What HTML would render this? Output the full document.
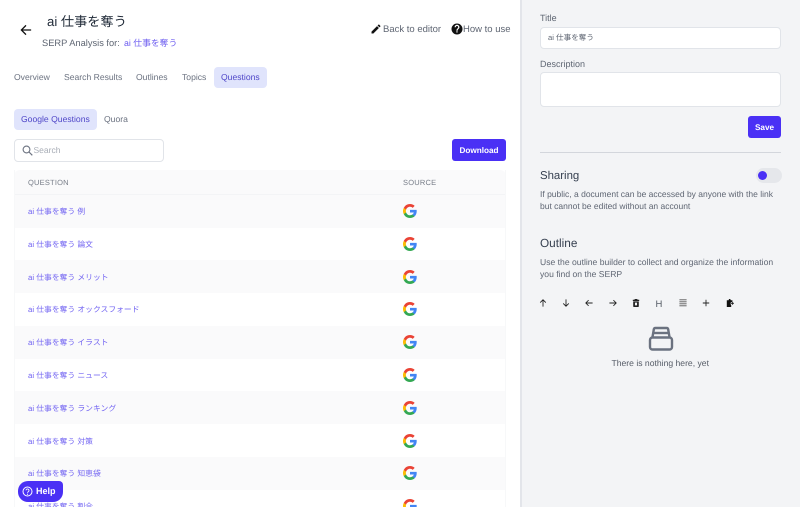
<!DOCTYPE html>
<html lang="ja"><head><meta charset="utf-8"><title>SERP Analysis</title>
<style>
*{box-sizing:border-box}
html,body{margin:0;padding:0;width:800px;height:507px;overflow:hidden;background:#fff}
body{position:relative;font-family:"Liberation Sans","Noto Sans CJK JP",sans-serif;color:#6b7280;text-rendering:geometricPrecision;filter:blur(.3px)}
.t{position:absolute;white-space:nowrap;line-height:1}
.a{position:absolute}
svg{position:absolute;display:block}
.tab{font-size:8.6px;color:#6b7280}
.act{position:absolute;background:#e0e4fc;border-radius:4px}
.link{color:#6c5cf0}
.row{position:absolute;left:14px;width:492px;height:33px}
.row.s{background:#fafafb}
.row span{position:absolute;left:14px;top:11.5px;font-size:7.8px;line-height:11px;color:#7264f2;white-space:nowrap}
.row svg{left:389px;top:9.5px}
.input{position:absolute;background:#fff;border:1px solid #e1e4e9;border-radius:4px}
.btn{position:absolute;background:#4a30f5;border-radius:3px;color:#fff;font-weight:bold;font-size:8.2px;text-align:center}
.ic{fill:none;stroke:#222;stroke-width:1.1}
</style></head><body>
<svg width="12" height="12" viewBox="0 0 14 14" style="left:20px;top:23.500px"><path d="M13 7H2M7 1.600L1.600 7 7 12.400" fill="none" stroke="#111" stroke-width="1.500"/></svg>
<div class="t" style="left:47px;top:15px;font-size:13.200px;color:#1f2937">ai 仕事を奪う</div>
<div class="t" style="left:42px;top:38.500px;font-size:9.300px;color:#5f6673">SERP Analysis for:</div>
<div class="t link" style="left:124px;top:38.500px;font-size:8.800px">ai 仕事を奪う</div>
<svg width="12" height="12" viewBox="0 0 24 24" style="left:370px;top:23px"><path d="M3 17.250V21h3.750L17.800 9.940l-3.750-3.750zM20.700 7.040a1 1 0 0 0 0-1.410l-2.340-2.340a1 1 0 0 0-1.410 0l-1.830 1.830 3.750 3.750z" fill="#111"/></svg>
<div class="t" style="left:383px;top:24.500px;font-size:9.500px;color:#5f6673">Back to editor</div>
<svg width="12" height="12" viewBox="0 0 24 24" style="left:450.500px;top:23px"><path d="M12 1a11 11 0 1 0 0 22 11 11 0 0 0 0-22zm1.200 18h-2.500v-2.500h2.500zm2.600-7.800l-1.100 1.100c-.9.900-1.400 1.600-1.400 3.200h-2.500v-.6c0-1.200.5-2.300 1.400-3.200l1.500-1.600c.5-.4.7-1 .7-1.600a2.400 2.400 0 0 0-4.800 0H7.100a4.900 4.900 0 0 1 9.800 0c0 1.100-.4 2-1.100 2.700z" fill="#111"/></svg>
<div class="t" style="left:463px;top:24.500px;font-size:9.500px;color:#5f6673">How to use</div>

<div class="t tab" style="left:14px;top:73px">Overview</div>
<div class="t tab" style="left:64px;top:73px">Search Results</div>
<div class="t tab" style="left:136px;top:73px">Outlines</div>
<div class="t tab" style="left:182px;top:73px">Topics</div>
<div class="act" style="left:214px;top:67px;width:53px;height:21px"></div>
<div class="t tab" style="left:221px;top:73px;color:#4f46c8">Questions</div>

<div class="act" style="left:14px;top:109px;width:83px;height:21px"></div>
<div class="t tab" style="left:21px;top:115px;color:#4f46c8">Google Questions</div>
<div class="t tab" style="left:104px;top:115px">Quora</div>

<div class="input" style="left:14px;top:139px;width:150px;height:23px"></div>
<svg width="11" height="11" viewBox="0 0 11 11" style="left:22px;top:145px"><circle cx="4.500" cy="4.500" r="3.400" fill="none" stroke="#6b7280" stroke-width="1.100"/><path d="M7 7l3.300 3.300" stroke="#6b7280" stroke-width="1.200"/></svg>
<div class="t" style="left:33.500px;top:146px;font-size:8.500px;color:#a8adb6">Search</div>
<div class="btn" style="left:452px;top:139px;width:54px;height:22px;line-height:23px">Download</div>

<div class="a" style="left:14px;top:170px;width:492px;height:25px;background:#fafafb;border-radius:6px 6px 0 0;border-bottom:1px solid #f3f4f6"></div>
<div class="t" style="left:28px;top:179px;font-size:7.500px;color:#777d88;letter-spacing:.2px">QUESTION</div>
<div class="t" style="left:403px;top:179px;font-size:7.500px;color:#777d88;letter-spacing:.2px">SOURCE</div>

<svg width="0" height="0" style="position:absolute"><defs><g id="g"><path d="M23.500 12.300c0-.8-.1-1.600-.2-2.300H12v4.500h6.500a5.500 5.500 0 0 1-2.400 3.600v3h3.900c2.300-2.100 3.500-5.200 3.500-8.800z" fill="#4285f4"/><path d="M12 24c3.200 0 6-1.100 8-2.900l-3.900-3c-1.100.7-2.500 1.200-4.100 1.200-3.100 0-5.800-2.100-6.700-5H1.300v3.100A12 12 0 0 0 12 24z" fill="#34a853"/><path d="M5.300 14.300a7.200 7.200 0 0 1 0-4.600V6.600H1.300a12 12 0 0 0 0 10.800z" fill="#fbbc05"/><path d="M12 4.800c1.800 0 3.300.6 4.600 1.800l3.400-3.400A11.500 11.500 0 0 0 12 0 12 12 0 0 0 1.300 6.600l4 3.100c.9-2.800 3.600-4.900 6.700-4.900z" fill="#ea4335"/></g></defs></svg>

<div class="row s" style="top:194.500px"><span>ai 仕事を奪う 例</span><svg width="14" height="14" viewBox="0 0 24 24"><use href="#g"/></svg></div>
<div class="row" style="top:227.300px"><span>ai 仕事を奪う 論文</span><svg width="14" height="14" viewBox="0 0 24 24"><use href="#g"/></svg></div>
<div class="row s" style="top:260.100px"><span>ai 仕事を奪う メリット</span><svg width="14" height="14" viewBox="0 0 24 24"><use href="#g"/></svg></div>
<div class="row" style="top:292.900px"><span>ai 仕事を奪う オックスフォード</span><svg width="14" height="14" viewBox="0 0 24 24"><use href="#g"/></svg></div>
<div class="row s" style="top:325.700px"><span>ai 仕事を奪う イラスト</span><svg width="14" height="14" viewBox="0 0 24 24"><use href="#g"/></svg></div>
<div class="row" style="top:358.500px"><span>ai 仕事を奪う ニュース</span><svg width="14" height="14" viewBox="0 0 24 24"><use href="#g"/></svg></div>
<div class="row s" style="top:391.300px"><span>ai 仕事を奪う ランキング</span><svg width="14" height="14" viewBox="0 0 24 24"><use href="#g"/></svg></div>
<div class="row" style="top:424.100px"><span>ai 仕事を奪う 対策</span><svg width="14" height="14" viewBox="0 0 24 24"><use href="#g"/></svg></div>
<div class="row s" style="top:456.900px"><span>ai 仕事を奪う 知恵袋</span><svg width="14" height="14" viewBox="0 0 24 24"><use href="#g"/></svg></div>
<div class="row" style="top:489.700px"><span>ai 仕事を奪う 割合</span><svg width="14" height="14" viewBox="0 0 24 24"><use href="#g"/></svg></div>
<div class="a" style="left:14px;top:170px;width:1px;height:337px;background:#f7f8f9"></div>
<div class="a" style="left:505px;top:170px;width:1px;height:337px;background:#f7f8f9"></div>

<div class="a" style="left:18px;top:481px;width:45px;height:21px;background:#4a30f5;border-radius:10px;border-top-right-radius:4px"></div>
<svg width="11" height="11" viewBox="0 0 11 11" style="left:22px;top:486px"><circle cx="5.500" cy="5.500" r="4.500" fill="none" stroke="#fff" stroke-width="1"/><path d="M4 4.400a1.500 1.500 0 1 1 2.300 1.300c-.5.300-.8.600-.8 1.100" fill="none" stroke="#fff" stroke-width=".9"/><circle cx="5.500" cy="8.200" r=".6" fill="#fff"/></svg>
<div class="t" style="left:36px;top:487px;font-size:9px;font-weight:bold;color:#fff">Help</div>

<!-- sidebar -->
<div class="a" style="left:520px;top:0;width:280px;height:507px;background:#f3f4f6;border-left:2px solid #e3e5ea"></div>
<div class="t" style="left:540px;top:14px;font-size:9px;color:#5f6673">Title</div>
<div class="input" style="left:540px;top:27px;width:241px;height:22px"></div>
<div class="t" style="left:548px;top:33.500px;font-size:7.600px;color:#5f6673">ai 仕事を奪う</div>
<div class="t" style="left:540px;top:60px;font-size:9px;color:#5f6673">Description</div>
<div class="input" style="left:540px;top:72px;width:241px;height:35px"></div>
<div class="btn" style="left:748px;top:116px;width:33px;height:22px;line-height:23px">Save</div>
<div class="a" style="left:540px;top:152px;width:241px;height:1px;background:#d3d6dc"></div>

<div class="t" style="left:540px;top:170.500px;font-size:11.400px;color:#374151">Sharing</div>
<div class="a" style="left:756px;top:168px;width:26px;height:15px;background:#e5e7eb;border-radius:8px"></div>
<div class="a" style="left:757.500px;top:171px;width:9px;height:9px;background:#4a30f5;border-radius:50%"></div>
<div class="t" style="left:540px;top:189px;font-size:8.500px;line-height:11.700px;color:#5f6673">If public, a document can be accessed by anyone with the link<br>but cannot be edited without an account</div>

<div class="t" style="left:540px;top:238px;font-size:11.800px;color:#374151">Outline</div>
<div class="t" style="left:540px;top:257px;font-size:8.600px;line-height:11.700px;color:#5f6673">Use the outline builder to collect and organize the information<br>you find on the SERP</div>

<svg class="ic" width="8" height="8" viewBox="0 0 10 10" style="left:538.500px;top:299px"><path d="M5 9.500V1M1.500 4.500L5 1l3.500 3.500"/></svg>
<svg class="ic" width="8" height="8" viewBox="0 0 10 10" style="left:561.500px;top:299px"><path d="M5 .5V9M1.500 5.500L5 9l3.500-3.500"/></svg>
<svg class="ic" width="8" height="8" viewBox="0 0 10 10" style="left:585px;top:299px"><path d="M9.500 5H1M4.500 1.500L1 5l3.500 3.500"/></svg>
<svg class="ic" width="8" height="8" viewBox="0 0 10 10" style="left:608.500px;top:299px"><path d="M.5 5H9M5.500 1.500L9 5 5.500 8.500"/></svg>
<svg width="8" height="8" viewBox="0 0 10 10" style="left:632px;top:299px"><path d="M3.500 0h3l.5 1h2v1.500H1V1h2zM1.500 3h7v6q0 1-1 1h-5q-1 0-1-1zM3.700 4.500v3.500h2.600V4.500z" fill="#222"/></svg>
<div class="t" style="left:655.500px;top:299.500px;font-size:9.500px;color:#555b66">H</div>
<svg width="8" height="8" viewBox="0 0 10 10" style="left:678.700px;top:299px"><path d="M.5 1h9M.5 3.500h9M.5 6h9M.5 8.500h9" stroke="#555" stroke-width="1"/></svg>
<svg class="ic" width="8" height="8" viewBox="0 0 10 10" style="left:702px;top:299px"><path d="M5 1v8M1 5h8"/></svg>
<svg width="8" height="8" viewBox="0 0 10 10" style="left:725.500px;top:299px"><path d="M1 1.500h2.200L3.800 0h1.500L6 1.500h2V4H6.500L5 5.500l1.500 2V10H1z" fill="#111"/><path d="M5.500 5.500h3.800M7.700 4l1.600 1.500L7.700 7" fill="none" stroke="#111" stroke-width=".9"/></svg>

<svg width="26" height="26" viewBox="0 0 26 26" style="left:648px;top:326px"><g fill="none" stroke="#6b7280" stroke-width="2.400" stroke-linejoin="round"><rect x="2" y="11.500" width="22" height="12" rx="2.500"/><path d="M4.500 11l1.300-7.500q.2-1.500 1.700-1.500h11q1.500 0 1.700 1.500L21.500 11"/><path d="M5.500 7h15"/></g></svg>
<div class="t" style="left:611.500px;top:358.500px;font-size:8.600px;color:#555b66">There is nothing here, yet</div>
</body></html>
